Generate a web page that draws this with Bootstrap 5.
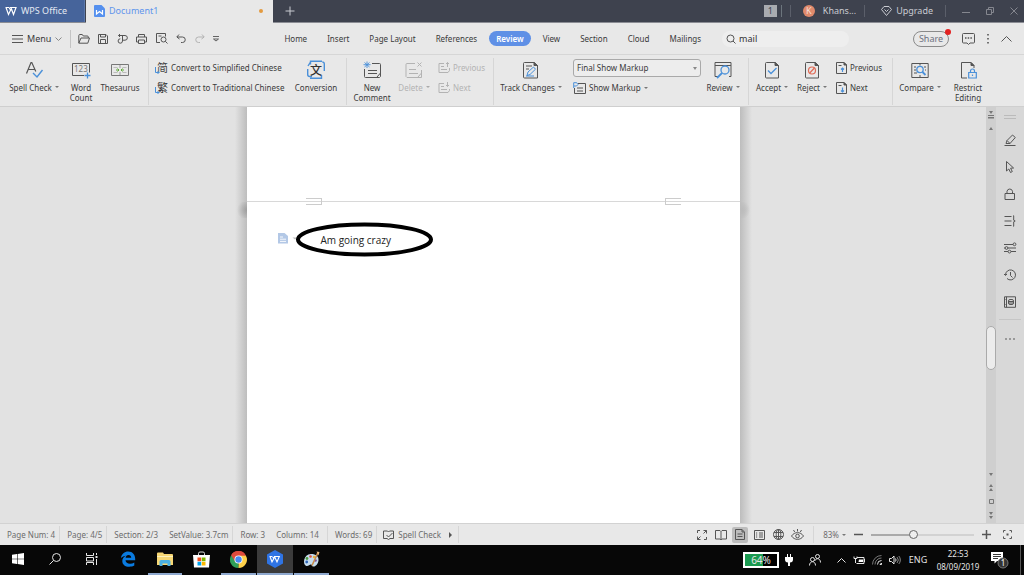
<!DOCTYPE html>
<html lang="en">
<head>
<meta charset="utf-8">
<meta name="viewport" content="width=device-width, initial-scale=1">
<title>Document1 - WPS Office</title>
<link href="https://cdn.jsdelivr.net/npm/bootstrap@5.3.0/dist/css/bootstrap.min.css" rel="stylesheet">
<style>
  :root { --ink: #3a3a3a; --blue: #4a90d9; --panel: #e8e8e8; --rule: #d6d6d6; }
  body { font-family: "Noto Sans", "Noto Sans CJK SC", sans-serif; font-size: 8px; line-height: 10px; color: var(--ink); background: #e2e2e2; }
  button, input, select { font: inherit; color: inherit; }
  .plain { background: none; border: 0; padding: 0; color: inherit; white-space: nowrap; }
  a { color: inherit; text-decoration: none; }
  svg { display: block; flex: none; fill: none; stroke: #555; stroke-width: 1; overflow: visible; }
  svg text { stroke: none; }
  .b { stroke: var(--blue); }
  .t9 { font-size: 9px; line-height: 12px; }

  /* title bar */
  .titlebar { background: #3e424e; color: #c9cbd1; height: 23px; border-bottom: 1px solid #8b8d94; padding-right: 6px; }
  .titlebar svg { stroke: #c9cbd1; }
  .titlebar .dim svg { stroke: #85878f; }
  .home-tab { background: #46649b; width: 85px; padding-left: 5px; gap: 4px; color: #e4e9f2; border-right: 1px solid #5c79ad; }
  .doc-tab { background: var(--panel); width: 187px; height: 23px; margin-left: 1px; padding: 0 10px 0 8px; gap: 4px; color: #5f95ec; }
  .dirty { width: 4px; height: 4px; border-radius: 50%; background: #e39a3f; }
  .vline { width: 1px; height: 12px; background: #5b5f6a; }
  .vline.light { background: #c4c4c4; height: 18px; }
  .count { background: #a9abb0; color: #3e424e; width: 13px; height: 12px; }
  .avatar { width: 12px; height: 12px; border-radius: 50%; background: #e08a6c; color: #f5ddd4; }

  /* menu row */
  .menurow { background: var(--panel); height: 32px; border-bottom: 1px solid var(--rule); padding-left: 12px; }
  .quick { width: 150px; margin-left: 2px; }
  .tabs { gap: 4px; margin-left: 53px; }
  .tabs a { padding: 0 8px; height: 15px; line-height: 15px; border-radius: 8px; }
  .tabs a.active { background: #5f90e6; color: #fff; font-weight: 600; padding: 0 7px; }
  .search { background: #eee; width: 127px; height: 16px; border-radius: 8px; padding-left: 4px; margin-left: 13px; gap: 3px; }
  .search input { background: none; border: 0; padding: 0; width: 90px; outline: 0; color: #333; }
  .share { border: 1px solid #8a8a8a; border-radius: 9px; height: 16px; width: 36px; margin-right: 13px; color: #6d7180; }
  .reddot { position: absolute; right: -3px; top: -3px; width: 6px; height: 6px; border-radius: 50%; background: #e32222; }

  /* ribbon */
  .ribbon { background: var(--panel); display: grid; grid-template-columns: 149px 198px 147px 255px 144px 1fr; height: 52px; border-bottom: 1px solid #cfcfcf; }
  .rgroup { display: flex; padding: 0 0 0 3px; margin: 3px 0 1px; border-right: 1px solid var(--rule); }
  .rgroup:last-child { border: 0; }
  .tool { display: flex; flex-direction: column; align-items: center; gap: 4px; padding-top: 3px; line-height: 10px; }
  .tool > span, .row-tool > span { white-space: nowrap; }
  .w36 { width: 36px; } .w40 { width: 40px; } .w42 { width: 42px; } .w44 { width: 44px; } .w48 { width: 48px; } .w52 { width: 52px; } .w68 { width: 68px; }
  .convert { width: 138px; padding-left: 3px; }
  .row-tool { display: flex; align-items: center; gap: 3px; height: 20px; }
  .caret { display: inline-block; border: 2px solid transparent; border-top-color: #777; border-bottom: 0; vertical-align: 3px; margin-left: 3px; }
  .caret.mid { vertical-align: 2px; }
  .off { color: #b3b3b3; opacity: 1; }
  .off svg { stroke: #b3b3b3; }
  .off .caret { border-top-color: #aaa; }
  .markup { display: block; width: 128px; height: 18px; margin: 1px 0; border: 1px solid #a9a9a9; border-radius: 3px; padding: 0 16px 0 3px; appearance: none;
    background: #ededed url("data:image/svg+xml,%3Csvg xmlns='http://www.w3.org/2000/svg' viewBox='0 0 4 3'%3E%3Cpath d='M0 0h4L2 3z' fill='%23888'/%3E%3C/svg%3E") right 3px center / 4px 3px no-repeat; }

  /* workspace */
  .work { min-height: 0; }
  .desk { background: #e2e2e2; }
  .sheet { width: 50%; position: relative; }
  .leaf { position: relative; background: #fff; }
  .leaf::before, .leaf::after { content: ""; position: absolute; top: 0; bottom: 0; width: 12px; }
  .leaf::before { right: 100%; background: linear-gradient(to right, #e2e2e200, #bdbdbd); }
  .leaf::after { left: 100%; background: linear-gradient(to left, #e2e2e200, #bdbdbd); }
  .leaf.upper { height: 95px; z-index: 1; box-shadow: inset 0 -1px #d8d8d8; }
  .corner { position: absolute; bottom: -3px; width: 16px; height: 7px; border: 1px solid #ccc; }
  .corner.start { left: 59px; border-left: 0; }
  .corner.end { right: 59px; border-right: 0; }
  .fold { position: absolute; top: 0; width: 12px; height: 16px; }
  .fold.start { right: 100%; background: radial-gradient(circle at 100% 50%, #8889, #8880 70%); }
  .fold.end { left: 100%; background: radial-gradient(circle at 0 50%, #8889, #8880 70%); }
  .para { font: 10px/16px "Open Sans", sans-serif; color: #222; padding: 30px 0 0 31px; }
  .para p { margin-left: 33px; }
  .ring { position: absolute; left: 49px; top: 20px; stroke: #000; stroke-width: 4; }

  .vscroll { width: 10px; background: #cfcfcf; }
  .vscroll svg { fill: #777; stroke: none; }
  .thumb { width: 10px; height: 44px; border: 1px solid #aaa; border-radius: 5px; background: #ececec; }
  .above { flex: 19; }
  .below { flex: 10; }
  .side { width: 28px; background: #d8d8d8; padding-top: 8px; }
  .side .plain { height: 27px; display: flex; align-items: center; }
  .grip { width: 12px; height: 4px; border: solid #bbb; border-width: 1px 0; margin-bottom: 7px; }
  .side-rule { width: 22px; height: 1px; background: #c6c6c6; margin: 4px 0 5px; }

  /* status bar */
  .status { background: var(--panel); height: 22px; border-top: 1px solid #d2d2d2; color: #6c6c6c; }
  .seg { padding: 0 4px 0 7px; height: 17px; line-height: 17px; }
  .status .seg.plain { padding: 0 6px; }
  .status .cut { border-right: 1px solid var(--rule); }
  .views { gap: 3px; margin-right: 8px; }
  .views .plain { width: 16px; height: 16px; border-radius: 2px; display: grid; place-items: center; }
  .views .on { background: #bdbdbd; }
  .status .percent { border-left: 1px solid var(--rule); height: 17px; padding-left: 9px; }
  .zoom-range { appearance: none; width: 103px; height: 10px; margin: 0 8px; background: linear-gradient(to right, #aaa 42%, #d2d2d2 42%) center / 100% 2px no-repeat; }
  .zoom-range::-webkit-slider-thumb { appearance: none; width: 9px; height: 9px; border: 1px solid #666; border-radius: 50%; background: #eee; }

  /* taskbar */
  .taskbar { background: #070707; height: 30px; color: #e6e6e6; }
  .taskbar svg { stroke: #e6e6e6; }
  .apps { flex: 0 0 330px; }
  .apps .plain { flex: 1; display: grid; place-items: center; border-bottom: 2px solid transparent; }
  .apps .open { border-image: linear-gradient(to right, #0000 3px, #8fa9cf 3px calc(100% - 3px), #0000 calc(100% - 3px)) 2; }
  .apps .current { background: #3b3b3b; border-bottom-color: #8fa9cf; }
  .tray > * { display: grid; place-items: center; height: 30px; }
  .w18 { width: 18px; } .w34 { width: 34px; } .w28 { width: 28px; } .w38 { width: 38px; }
  .charge { width: 36px; height: 16px; border: 2px solid #fff; background: linear-gradient(to right, #1a9a50 55%, #000 55%); font-size: 10px; line-height: 12px; }
  .clock { line-height: 13px; white-space: nowrap; }
  .peek { width: 4px; border-left: 1px solid #555; }
</style>
</head>
<body class="d-flex flex-column vh-100 overflow-hidden">

<header>
  <div class="titlebar t9 d-flex align-items-center">
    <button class="plain home-tab d-flex align-items-center h-100" type="button">
      <svg width="12" height="10" viewBox="0 0 12 10"><path d="M.5 1.500h3.500M1 1.500l2.500 7 2.800-6 2.200 6 2.500-7H5l2.500 0M4 1.500l1.800 3" stroke="#fff" stroke-width="1.200"/></svg>
      WPS Office
    </button>
    <div class="doc-tab d-flex align-items-center">
      <svg width="11" height="12" viewBox="0 0 11 12"><path d="M1 0h6.500L11 3.500V11a1 1 0 0 1-1 1H1a1 1 0 0 1-1-1V1a1 1 0 0 1 1-1z" fill="#5590ee" stroke="none"/><path d="M2.500 5v4l3-2.500 3 2.500V5" stroke="#fff" stroke-width="1.200"/></svg>
      Document1
      <span class="dirty ms-auto"></span>
    </div>
    <button class="plain ms-2 ps-1" type="button" aria-label="New tab"><svg width="10" height="10" viewBox="0 0 10 10"><path d="M5 .5v9M.5 5h9"/></svg></button>
    <div class="d-flex align-items-center ms-auto">
      <span class="count text-center">1</span><span class="vline bg-secondary ms-1 me-1"></span>
      <span class="vline ms-1 me-1"></span>
      <span class="avatar text-center ms-2">K</span>
      <span class="ms-2">Khans...</span>
      <span class="vline ms-2 me-3"></span>
      <button class="plain d-flex align-items-center me-1" type="button"><svg width="11" height="10" viewBox="0 0 11 10"><path d="M3 .5h5l2.500 3-5 6-5-6zM3.500 3.500l2 2 2-2"/></svg><span class="ms-1">Upgrade</span></button>
      <span class="vline ms-2 me-3"></span>
      <button class="plain dim me-3" type="button" aria-label="Minimize"><svg width="8" height="8" viewBox="0 0 8 8"><path d="M0 5.500h8"/></svg></button>
      <button class="plain dim me-3" type="button" aria-label="Restore"><svg width="8" height="8" viewBox="0 0 8 8"><path d="M.5 2.500h5v5h-5zM2.500 2V.5h5v5H6"/></svg></button>
      <button class="plain dim" type="button" aria-label="Close"><svg width="8" height="8" viewBox="0 0 8 8"><path d="M.5.5l7 7M7.500.5l-7 7"/></svg></button>
    </div>
  </div>

  <nav class="menurow d-flex align-items-center">
    <button class="plain t9 d-flex align-items-center" type="button">
      <svg width="11" height="8" viewBox="0 0 11 8"><path d="M0 .5h11M0 4h11M0 7.500h11"/></svg>
      <span class="mx-1">Menu</span>
      <svg width="7" height="4" viewBox="0 0 7 4"><path d="M.5.5l3 3 3-3" stroke="#888"/></svg>
    </button>
    <span class="vline light ms-2"></span>
    <div class="quick d-flex align-items-center justify-content-around">
      <button class="plain" type="button" aria-label="Open"><svg width="12" height="10" viewBox="0 0 12 10"><path d="M.8 9V1.500a1 1 0 0 1 1-1h2.500l1 1.500h4a1 1 0 0 1 1 1v1M.8 9.200 3 4h8.500L9.800 9.200z"/></svg></button>
      <button class="plain" type="button" aria-label="Save"><svg width="10" height="10" viewBox="0 0 10 10"><path d="M.5.5H8L9.500 2v7.500h-9zM2.500.5v2.500h5V.5M2.500 9.500v-4h5v4"/></svg></button>
      <button class="plain" type="button" aria-label="Export to PDF"><svg width="11" height="10" viewBox="0 0 11 10"><path d="M1.500 1.500h6.500a2.300 2.300 0 0 1 0 4.700H5.500M3 0 1.500 1.500 3 3M5.500 1.500v5.500a2.200 2.200 0 1 1-2.200-2.200"/></svg></button>
      <button class="plain" type="button" aria-label="Print"><svg width="11" height="10" viewBox="0 0 11 10"><path d="M2.500 3V.5h6V3M2.500 8H.5V3h10v5h-2M2.500 6h6v3.500h-6z"/></svg></button>
      <button class="plain" type="button" aria-label="Print preview"><svg width="12" height="11" viewBox="0 0 12 11"><path d="M4 9.500H.5V.5h9v3M2.500 3h3"/><circle cx="7.500" cy="6.500" r="2.500"/><path d="M9.300 8.300 11.500 10.500"/></svg></button>
      <button class="plain" type="button" aria-label="Undo"><svg width="10" height="9" viewBox="0 0 10 9"><path d="M3 .5.8 3 3.500 5M1 3h5.500a2.700 2.700 0 0 1 0 5.500H5"/></svg></button>
      <button class="plain off" type="button" aria-label="Redo"><svg width="10" height="9" viewBox="0 0 10 9"><path d="M7 .5 9.200 3 6.500 5M9 3H3.500a2.700 2.700 0 0 0 0 5.500H5"/></svg></button>
      <button class="plain" type="button" aria-label="Customize"><svg width="6" height="6" viewBox="0 0 6 6"><path d="M0 .5h6M.5 3l2.500 2 2.500-2z" stroke-width=".9"/></svg></button>
    </div>
    <div class="tabs d-flex">
      <a href="#">Home</a><a href="#">Insert</a><a href="#">Page Layout</a><a href="#">References</a><a class="active" href="#">Review</a><a href="#">View</a><a href="#">Section</a><a href="#">Cloud</a><a href="#">Mailings</a>
    </div>
    <label class="search t9 d-flex align-items-center">
      <svg width="10" height="10" viewBox="0 0 10 10"><circle cx="4.500" cy="4.500" r="3.500"/><path d="M7 7l2.500 2.500"/></svg>
      <input type="text" value="mail" aria-label="Search">
    </label>
    <div class="d-flex align-items-center ms-auto me-2 pe-1">
      <button class="plain share t9 position-relative lh-1" type="button">Share<span class="reddot"></span></button>
      <button class="plain me-2" type="button" aria-label="Comments"><svg width="13" height="12" viewBox="0 0 13 12"><path d="M1.500.5h10a1 1 0 0 1 1 1v7.500a1 1 0 0 1-1 1H8l-1.500 1.500L5 10H1.500a1 1 0 0 1-1-1V1.500a1 1 0 0 1 1-1z"/><path d="M3 5h7" stroke-dasharray="1.500 1.200" stroke-width="1.300"/></svg></button>
      <button class="plain mx-1" type="button" aria-label="More"><svg width="2" height="10" viewBox="0 0 2 10"><path d="M1 0v10" stroke-width="1.600" stroke-dasharray="1.600 2.400"/></svg></button>
      <button class="plain ms-2" type="button" aria-label="Collapse ribbon"><svg width="11" height="6" viewBox="0 0 11 6"><path d="M.5 5.500l5-5 5 5"/></svg></button>
    </div>
  </nav>

  <div class="ribbon">
    <div class="rgroup ps-2">
      <button class="plain tool w52" type="button"><svg width="18" height="18" viewBox="0 0 18 18"><path d="M1.500 12.500 6 1.500h.8l4 9M3 8.500h6.500" stroke-width="1.200"/><path class="b" d="M8 12l4 4 5.500-7" stroke-width="1.400"/></svg><span>Spell Check<i class="caret"></i></span></button>
      <button class="plain tool w42" type="button"><svg width="18" height="18" viewBox="0 0 18 18"><path d="M12 14.500H.5V2.500h17v9"/><text x="2" y="11" font-size="8" fill="#777">123</text><path class="b" d="M15.500 11.500v6M12.500 14.500h6" stroke-width="1.300"/></svg><span>Word<br>Count</span></button>
      <button class="plain tool w36" type="button"><svg width="18" height="18" viewBox="0 0 18 18"><path d="M.5 3.500h17v11H.5z" stroke="#777"/><path d="M9 4v3m0 4v3" stroke="#999"/><path d="M2.500 6.500h4m5 0h4M2.500 11.500h4m5 0h4" stroke="#bbb"/><path d="M5 9h3M13 9h-3M6.500 7.500 8 9l-1.500 1.500M11.500 7.500 10 9l1.500 1.500" stroke="#5fa83a"/></svg><span>Thesaurus</span></button>
    </div>
    <div class="rgroup">
      <div class="convert">
        <button class="plain row-tool" type="button"><svg width="13" height="14" viewBox="0 0 13 14"><text x="2" y="11" font-size="11" fill="#444">简</text><path class="b" d="M.5 6v5.500H4M2.500 10 4 11.500 2.500 13"/></svg><span>Convert to Simplified Chinese</span></button>
        <button class="plain row-tool" type="button"><svg width="13" height="14" viewBox="0 0 13 14"><text x="2" y="11" font-size="11" fill="#333">繁</text><path class="b" d="M.5 6v5.500H4M2.500 10 4 11.500 2.500 13"/></svg><span>Convert to Traditional Chinese</span></button>
      </div>
      <button class="plain tool w52" type="button"><svg width="18" height="18" viewBox="0 0 18 18"><path class="b" d="M3.500 3.500V.3H15M.7 8v5.500a2 2 0 0 0 2 2H5M1 5l2.500-4M17.300 10V3a2 2 0 0 0-2-2M14.500 14v3.200H3" stroke-width="1.400"/><text x="3" y="13.500" font-size="12" font-weight="500" fill="#333">文</text></svg><span>Conversion</span></button>
    </div>
    <div class="rgroup">
      <button class="plain tool w44" type="button"><svg width="18" height="18" viewBox="0 0 18 18"><path d="M9 2.500h7.500a1 1 0 0 1 1 1v12l-1 1h-14a1 1 0 0 1-1-1V8M5 9.500h9M5 12.500h9M17.500 12l-3.500 4"/><path class="b" d="M4 .5v6.500M.5 3.700h7M1.500 1.500l5 4.500M6.500 1.500l-5 4.500" stroke-width=".9"/></svg><span>New<br>Comment</span></button>
      <button class="plain tool w40 off" type="button"><svg width="18" height="18" viewBox="0 0 18 18"><path d="M10 2.500H2a1 1 0 0 0-1 1v12l1 1h14.500V9M4 8.500h7M4 12.500h9M16.500 12l-3.500 4M12.500 1.500l4 4M16.500 1.500l-4 4"/></svg><span>Delete<i class="caret"></i></span></button>
      <div class="ps-1">
        <button class="plain row-tool off" type="button"><svg width="12" height="12" viewBox="0 0 12 12"><path d="M6 1.500H1v9h9l1.500-2V6M3 4.500h3M3 7.500h6M9.500 5V.5M8 2 9.500.5 11 2"/></svg><span>Previous</span></button>
        <button class="plain row-tool off" type="button"><svg width="12" height="12" viewBox="0 0 12 12"><path d="M6 1.500H1v9h9l1.500-2V7M3 4.500h3M3 7.500h6M9.500 0v4.500M8 3l1.500 1.500L11 3"/></svg><span>Next</span></button>
      </div>
    </div>
    <div class="rgroup">
      <button class="plain tool w68" type="button"><svg width="18" height="18" viewBox="0 0 18 18"><path d="M12 1.500H2.500a1 1 0 0 0-1 1v13.500a1 1 0 0 0 1 1h13V4.500zM4 5h6M4 8h3"/><path d="M12 1.500v3h3.500z" fill="#555"/><path class="b" d="M5 14.500 6 11l5.500-5 2 2.200L8 13.500zM4 15h8"/></svg><span>Track Changes<i class="caret"></i></span></button>
      <div class="ps-1 ms-1">
        <select class="markup" aria-label="Markup view"><option>Final Show Markup</option></select>
        <button class="plain row-tool" type="button"><svg width="13" height="12" viewBox="0 0 13 12"><path d="M5 1.500h7.500v10h-11V6M4 6h6M4 9h6"/><path class="b" d="M.7 6V.7h3L5 2.500 3.500 4H1"/></svg><span>Show Markup<i class="caret mid"></i></span></button>
      </div>
      <button class="plain tool w44" type="button"><svg width="18" height="18" viewBox="0 0 18 18"><path d="M5 15.500H1V1.500h16v14h-2M1 4.500h16"/><circle class="b" cx="11" cy="9" r="4" stroke-width="1.300"/><path class="b" d="M8 12l-5 5" stroke-width="1.800"/></svg><span>Review<i class="caret"></i></span></button>
    </div>
    <div class="rgroup">
      <button class="plain tool w40" type="button"><svg width="18" height="18" viewBox="0 0 18 18"><path d="M12 1.500H3.500a1 1 0 0 0-1 1v13.500a1 1 0 0 0 1 1h12V4.500z"/><path d="M12 1.500v3h3.500z" fill="#555"/><path class="b" d="M5 9.500l3 3 5.500-5.500" stroke-width="1.300"/></svg><span>Accept<i class="caret"></i></span></button>
      <button class="plain tool w40" type="button"><svg width="18" height="18" viewBox="0 0 18 18"><path d="M12 1.500H3.500a1 1 0 0 0-1 1v13.500a1 1 0 0 0 1 1h12V4.500z"/><path d="M12 1.500v3h3.500z" fill="#555"/><g stroke="#e06a55" stroke-width="1.200"><circle cx="9" cy="9.500" r="3.500"/><path d="M6.700 12l4.700-5"/></g></svg><span>Reject<i class="caret"></i></span></button>
      <div class="ps-1">
        <button class="plain row-tool" type="button"><svg width="11" height="12" viewBox="0 0 11 12"><path d="M8 .5H.5v11h10V3zM2.500 3.500h3"/><path d="M8 .5V3h2.500z" fill="#555"/><path class="b" d="M6.500 10V6M5 7.500 6.500 6 8 7.500" stroke-width="1.200"/></svg><span>Previous</span></button>
        <button class="plain row-tool" type="button"><svg width="11" height="12" viewBox="0 0 11 12"><path d="M8 .5H.5v11h10V3zM2.500 3.500h3"/><path d="M8 .5V3h2.500z" fill="#555"/><path class="b" d="M6.500 5.500v4.500M5 8.500 6.500 10 8 8.500" stroke-width="1.200"/></svg><span>Next</span></button>
      </div>
    </div>
    <div class="rgroup">
      <button class="plain tool w48" type="button"><svg width="18" height="18" viewBox="0 0 18 18"><path d="M.8 2.500h16.400v14H.8zM9 2.500v2M9 14v2.500M3 6h2M3 9h2M3 12h3M13 6h2M14 9h1"/><circle class="b" cx="9" cy="8.500" r="3.200" stroke-width="1.300"/><path class="b" d="M11.500 11l3 3" stroke-width="1.800"/></svg><span>Compare<i class="caret"></i></span></button>
      <button class="plain tool w48" type="button"><svg width="18" height="18" viewBox="0 0 18 18"><path d="M8 17H2.500V1.500H12L15 4.500V7"/><path d="M12 1.500v3h3z" fill="#555"/><path class="b" d="M9.700 11.500h7.600v5.500H9.700zM11.500 11.500V10a2 2 0 0 1 4 0v1.500M13.500 13.500v1.500" stroke-width="1.200"/></svg><span>Restrict<br>Editing</span></button>
    </div>
  </div>
</header>

<main class="work d-flex flex-grow-1">
  <div class="desk flex-grow-1 d-flex justify-content-center">
    <article class="sheet d-flex flex-column">
      <div class="leaf upper"><span class="corner start"></span><span class="corner end"></span></div>
      <div class="leaf flex-grow-1">
        <span class="fold start"></span><span class="fold end"></span>
        <div class="para d-flex">
          <svg width="10" height="12" viewBox="0 0 10 12"><path d="M0 1h6.500L10 4v7.500H0z" fill="#b3c8e6" stroke="none"/><path d="M2 5h3M2 7.200h6M2 9.400h6" stroke="#fff" stroke-width=".9"/><path d="M14.500 5.500h5L17 7.500z" fill="#bbb" stroke="none"/></svg>
          <p class="mb-0">Am going crazy</p>
        </div>
        <svg class="ring" width="137" height="35" viewBox="0 0 137 35"><ellipse cx="68.500" cy="17.500" rx="66.500" ry="15"/></svg>
      </div>
    </article>
  </div>

  <div class="vscroll d-flex flex-column align-items-center">
    <svg class="mt-1" width="6" height="8" viewBox="0 0 6 8"><path d="M1 0h4L3 3zM0 4h6v1H0zM0 6h6v1.500H0z"/></svg>
    <svg class="mt-2" width="4" height="3" viewBox="0 0 4 3"><path d="M0 3h4L2 0z"/></svg>
    <span class="above"></span>
    <span class="thumb"></span>
    <span class="below"></span>
    <svg class="mb-2" width="4" height="3" viewBox="0 0 4 3"><path d="M0 0h4L2 3z"/></svg>
    <svg class="mb-2" width="4" height="7" viewBox="0 0 4 7"><path d="M0 3h4L2 0zM0 7h4L2 4z"/></svg>
    <svg class="mb-2" width="5" height="5" viewBox="0 0 5 5"><path d="M.5.5h4v4h-4z" fill="none" stroke="#777"/></svg>
    <svg class="mb-1" width="4" height="7" viewBox="0 0 4 7"><path d="M0 0h4L2 3zM0 4h4L2 7z"/></svg>
  </div>

  <aside class="side d-flex flex-column align-items-center">
    <span class="grip"></span>
    <button class="plain" type="button" aria-label="Styles"><svg width="12" height="12" viewBox="0 0 12 12"><path d="M2 9.500 3 6.500 8.500 1 11.300 3.500 6 9.500zM3 6.500l3 3M.5 11.500h11"/></svg></button>
    <button class="plain" type="button" aria-label="Select"><svg width="12" height="12" viewBox="0 0 12 12"><path d="M2.500.5v9.500l2.300-2 1.700 3.500 1.800-.9-1.700-3.400 3-.2z"/></svg></button>
    <button class="plain" type="button" aria-label="Protect"><svg width="12" height="12" viewBox="0 0 12 12"><path d="M1 5.500h9.500v6H1zM3 5.500V3.300a2.800 2.800 0 0 1 5.500 0v2.200"/></svg></button>
    <button class="plain" type="button" aria-label="Paragraph"><svg width="12" height="12" viewBox="0 0 12 12"><path d="M.5 1.500h7M.5 6h7M.5 10.500h7M9 .8h.7v4.400l1.500.8-1.500.8v4.400H9"/></svg></button>
    <button class="plain" type="button" aria-label="Properties"><svg width="12" height="12" viewBox="0 0 12 12"><path d="M0 2.500h9M4 6h8M0 6h1M0 9.500h4M7 9.500h5"/><circle cx="10.500" cy="2.300" r="1.400"/><circle cx="2.500" cy="6" r="1.400"/><circle cx="5.500" cy="9.600" r="1.400"/></svg></button>
    <button class="plain" type="button" aria-label="History"><svg width="12" height="12" viewBox="0 0 12 12"><path d="M1.500 6a5 5 0 1 1 1.500 3.500M0 5l1.500 1.500L3 5M6.500 3v3.500L8.500 8.500"/></svg></button>
    <button class="plain" type="button" aria-label="Backup"><svg width="12" height="12" viewBox="0 0 12 12"><path d="M.5.800h11v10.500H.5zM2.500.8v10.500M0 3.500h1.500M0 8.500h1.500"/><rect x="4.500" y="3.500" width="5" height="5" rx="1.500"/><path d="M4.500 5.500h5M4.500 7h5"/></svg></button>
    <span class="side-rule"></span>
    <button class="plain" type="button" aria-label="More panels"><svg width="10" height="2" viewBox="0 0 10 2"><path d="M0 1h10" stroke="#999" stroke-width="2" stroke-dasharray="2"/></svg></button>
  </aside>
</main>

<footer>
  <div class="status d-flex align-items-center">
    <span class="seg cut">Page Num: 4</span><span class="seg cut">Page: 4/5</span><span class="seg">Section: 2/3</span><span class="seg cut">SetValue: 3.7cm</span><span class="seg">Row: 3</span><span class="seg cut pe-2">Column: 14</span><span class="seg cut">Words: 69</span>
    <button class="plain seg cut d-flex align-items-center" type="button"><svg class="me-1" width="11" height="10" viewBox="0 0 11 10"><path d="M4 8.500H.5V1h4l1 1 1-1h4v7.500H7M4 8.500l1.500 1 1.500-1M3.500 5l2 2 4-4"/></svg>Spell Check<svg class="ms-2" width="3" height="6" viewBox="0 0 3 6"><path d="M0 0v6l3-3z" fill="#555" stroke="none"/></svg></button>
    <div class="views d-flex ms-auto">
      <button class="plain" type="button" aria-label="Full screen"><svg width="10" height="10" viewBox="0 0 10 10"><path d="M.5 3V.5H3M9.500 7v2.500H7M6.500.5h3v3M9.500.5l-3 3M3.500 9.500h-3v-3M.5 9.500l3-3"/></svg></button>
      <button class="plain" type="button" aria-label="Reading"><svg width="12" height="10" viewBox="0 0 12 10"><path d="M.5.5H5l1 1 1-1h4.500V9H7l-1 .8L5 9H.5zM6 1.500v8"/></svg></button>
      <button class="plain on" type="button" aria-label="Print layout"><svg width="10" height="11" viewBox="0 0 10 11"><path d="M.5.5h6.500l2.500 2.500v7.500h-9zM2.500 5h5M2.500 7.500h5M7 .5V3h2"/></svg></button>
      <button class="plain" type="button" aria-label="Outline"><svg width="11" height="10" viewBox="0 0 11 10"><path d="M.5.5h10v9H.5z"/><path d="M2 3h1.200M5 3h4M2 5h1.200M5 5h4M2 7h1.200M5 7h4"/></svg></button>
      <button class="plain" type="button" aria-label="Web layout"><svg width="11" height="11" viewBox="0 0 11 11"><circle cx="5.500" cy="5.500" r="5"/><ellipse cx="5.500" cy="5.500" rx="2.300" ry="5"/><path d="M1 3.500h9M1 7.500h9M5.500.5v10"/></svg></button>
      <button class="plain" type="button" aria-label="Eye protection"><svg width="13" height="11" viewBox="0 0 13 11"><path d="M.5 7c3-4.500 9-4.500 12 0-3 4.500-9 4.500-12 0zM6.500 0v2.500M2.500 1l1.200 2M10.500 1 9.300 3"/><circle cx="6.500" cy="7" r="1.800"/></svg></button>
    </div>
    <button class="plain percent" type="button">83%<i class="caret mid"></i></button>
    <button class="plain ms-2" type="button" aria-label="Zoom out"><svg width="9" height="9" viewBox="0 0 9 9"><path d="M0 4.500h9" stroke-width="1.500"/></svg></button>
    <input class="zoom-range" type="range" min="0" max="100" value="40" aria-label="Zoom">
    <button class="plain" type="button" aria-label="Zoom in"><svg width="9" height="9" viewBox="0 0 9 9"><path d="M0 4.500h9M4.500 0v9" stroke-width="1.500"/></svg></button>
    <button class="plain ms-2 me-2" type="button" aria-label="Fit page"><svg class="m-1" width="9" height="9" viewBox="0 0 9 9"><path d="M.5 2.500v-2h2M6.500.5h2v2M8.500 6.500v2h-2M2.500 8.500h-2v-2"/><path d="M3.500 4.500h2" stroke-width="2"/></svg></button>
  </div>

  <div class="taskbar d-flex justify-content-between">
    <div class="apps d-flex">
      <button class="plain" type="button" aria-label="Start"><svg width="12" height="12" viewBox="0 0 12 12"><path d="M0 1.700 5 1v4.700H0zM5.600.9 12 0v5.700H5.600zM0 6.300h5V11l-5-.7zM5.600 6.300H12V12l-6.400-.9z" fill="#fff" stroke="none"/></svg></button>
      <button class="plain" type="button" aria-label="Search"><svg width="12" height="12" viewBox="0 0 12 12"><circle cx="7.500" cy="4.500" r="4"/><path d="M4.500 7.500.5 11.500"/></svg></button>
      <button class="plain" type="button" aria-label="Task view"><svg width="12" height="12" viewBox="0 0 12 12"><path d="M.5 0v2.500h7V0M.5 4.500h7v3.500h-7zM.5 12V9.500h7V12M10.500 0v2M10.500 6v6"/><path d="M9.500 4h2" stroke-width="2"/></svg></button>
      <button class="plain" type="button" aria-label="Edge"><svg width="16" height="16" viewBox="0 0 16 16"><path d="M1 7C1.500 3 4.500.5 8.200.5c4.500 0 7 3.200 7 7.500v1.200H5.500c.2 2.300 2 3.500 4.500 3.500 1.600 0 3-.4 4.300-1.200v3.100C13 15.400 11.300 15.800 9.300 15.800 5 15.800 2.300 13.500 2.300 10c0-2.300 1.200-4.200 3.500-5.300C3.800 5 2.300 5.800 1 7zm4.600-.2h5.600c0-1.800-1-2.800-2.700-2.800S5.900 5.100 5.600 6.800z" fill="#0a7be0" stroke="none"/></svg></button>
      <button class="plain open" type="button" aria-label="File Explorer"><svg width="16" height="14" viewBox="0 0 16 14"><path d="M0 1.500A1 1 0 0 1 1 .5h5l1 1.500h8a1 1 0 0 1 1 1V13H0z" fill="#f7d774" stroke="none"/><path d="M0 4h16v1H0z" fill="#fff2bd" stroke="none"/><path d="M2.500 14V9.500a1.500 1.500 0 0 1 1.500-1.500h8a1.500 1.500 0 0 1 1.500 1.500V14h-3v-2.500h-5V14z" fill="#4ab0e4" stroke="none"/></svg></button>
      <button class="plain" type="button" aria-label="Store"><svg width="17" height="17" viewBox="0 0 17 17"><path d="M0 4h17l-1 12.500H1z" fill="#fff" stroke="none"/><path d="M5.500 4V2.500a1.500 1.500 0 0 1 1.500-1.500h3a1.500 1.500 0 0 1 1.500 1.500V4" stroke="#ddd"/><g stroke="none"><path d="M4.500 6.500h3.700v3.700H4.500z" fill="#f04e23"/><path d="M8.800 6.500h3.700v3.700H8.800z" fill="#7db700"/><path d="M4.500 10.800h3.700v3.700H4.500z" fill="#00a3ee"/><path d="M8.800 10.800h3.700v3.700H8.800z" fill="#fcb900"/></g></svg></button>
      <button class="plain open" type="button" aria-label="Chrome"><svg width="17" height="17" viewBox="0 0 17 17"><g stroke="none"><path d="M8.500 8.500 1.200 4.200A8.400 8.400 0 0 1 15.800 4.400z" fill="#dd4b3e"/><path d="M8.500 8.500 15.800 4.400A8.400 8.400 0 0 1 8.300 17z" fill="#fdd04a"/><path d="M8.500 8.500 8.300 17A8.400 8.400 0 0 1 1.200 4.200z" fill="#2f9e58"/><path d="M8.500 4.400h7.300L12 10.500z" fill="#fdd04a"/><path d="M8.500 4.400h7.300A8.400 8.400 0 0 0 1.200 4.200L5 10.500z" fill="#dd4b3e"/><circle cx="8.500" cy="8.500" r="4" fill="#fff"/><circle cx="8.500" cy="8.500" r="3.200" fill="#4889f0"/></g></svg></button>
      <button class="plain current" type="button" aria-label="WPS Office"><svg width="16" height="18" viewBox="0 0 16 18"><path d="M8 0l8 4.500v9L8 18l-8-4.500v-9z" fill="#2f74e4" stroke="none"/><path d="M2.500 6.500h2.500M3 6.500 5 12l2.700-5L10 12l2.300-5.500H7M5.500 6.500 7 9" stroke="#fff" stroke-width="1.100"/></svg></button>
      <button class="plain open" type="button" aria-label="Paint"><svg width="17" height="17" viewBox="0 0 17 17"><g stroke="none"><path d="M8 3c5 0 8 2.500 7.500 6.500S12 16 10 15.500 9.500 13 7.500 13.500 5 16 2.500 14.500 0 3.500 8 3z" fill="#c5dcef"/><circle cx="4" cy="7.500" r="1.400" fill="#4d9b3e"/><circle cx="7.500" cy="5.500" r="1.300" fill="#d8503a"/><circle cx="11" cy="6" r="1.200" fill="#e8b33b"/><circle cx="3.700" cy="11" r="1.400" fill="#2f66b8"/><circle cx="12.500" cy="9.500" r="1.300" fill="#7a4fa0"/></g><path d="M15 1.500 9 14.500" stroke="#c98c4b" stroke-width="1.600"/><path d="M13.500.500l3 .5-1 3.500z" fill="#e6b680" stroke="none"/></svg></button>
    </div>
    <div class="tray d-flex">
      <span class="w38"><span class="charge text-center d-block">64%</span></span>
      <span class="w18"><svg width="8" height="12" viewBox="0 0 8 12"><path d="M2 0h1v3h2V0h1v3h2v2.500A3 3 0 0 1 5 8.500V12H3V8.500a3 3 0 0 1-3-3V3h2z" fill="#fff" stroke="none"/></svg></span>
      <button class="plain w34" type="button" aria-label="People"><svg width="12" height="12" viewBox="0 0 12 12"><circle cx="3.500" cy="5.500" r="2"/><circle cx="8.500" cy="2.500" r="2"/><path d="M.5 11.500c0-5 6-5 6 0M5.800 7c.8-3.200 5.700-3.200 5.700 1.500"/></svg></button>
      <button class="plain w18" type="button" aria-label="Hidden icons"><svg width="9" height="5" viewBox="0 0 9 5"><path d="M.5 4.500l4-4 4 4"/></svg></button>
      <span class="w18"><svg width="12" height="9" viewBox="0 0 12 9"><path d="M4 1.500h7v6H3.500M11.500 3v3M1 .5v2h3v-2M2.500 3v4"/><path d="M6 3.500h4v2.500H5.500z" fill="#fff" stroke="none"/></svg></span>
      <span class="w18"><svg width="10" height="10" viewBox="0 0 10 10"><path d="M.5 9.500a9 9 0 0 1 9-9M3 9.500a6.500 6.500 0 0 1 6.500-6.500" stroke="#777"/><path d="M5.500 9.500a4 4 0 0 1 4-4M8 9.500h1.500V8z"/></svg></span>
      <span class="w18"><svg width="12" height="10" viewBox="0 0 12 10"><path d="M.5 3.500h2L5 1v8L2.500 6.500h-2zM6.500 3.500a2.500 2.500 0 0 1 0 3"/><path d="M8 2a4.500 4.500 0 0 1 0 6M9.800 1a6 6 0 0 1 0 8" stroke="#888"/></svg></span>
      <span class="w28 me-1 t9">ENG</span>
      <span class="w44 text-center"><span class="clock">22:53<br>08/09/2019</span></span>
      <button class="plain w40" type="button" aria-label="Notifications"><svg width="18" height="18" viewBox="0 0 18 18"><path d="M0 1h12v9H6l-2.500 2.500V10H0z" fill="#fff" stroke="none"/><path d="M2 3.500h8M2 5.500h8M2 7.500h5" stroke="#222" stroke-width=".9"/><circle cx="12" cy="12" r="5" fill="#333" stroke="#777"/><text x="9.700" y="15" font-size="8" fill="#fff">1</text></svg></button>
      <span class="peek"></span>
    </div>
  </div>
</footer>

<script src="https://cdn.jsdelivr.net/npm/bootstrap@5.3.0/dist/js/bootstrap.bundle.min.js"></script>
</body>
</html>
